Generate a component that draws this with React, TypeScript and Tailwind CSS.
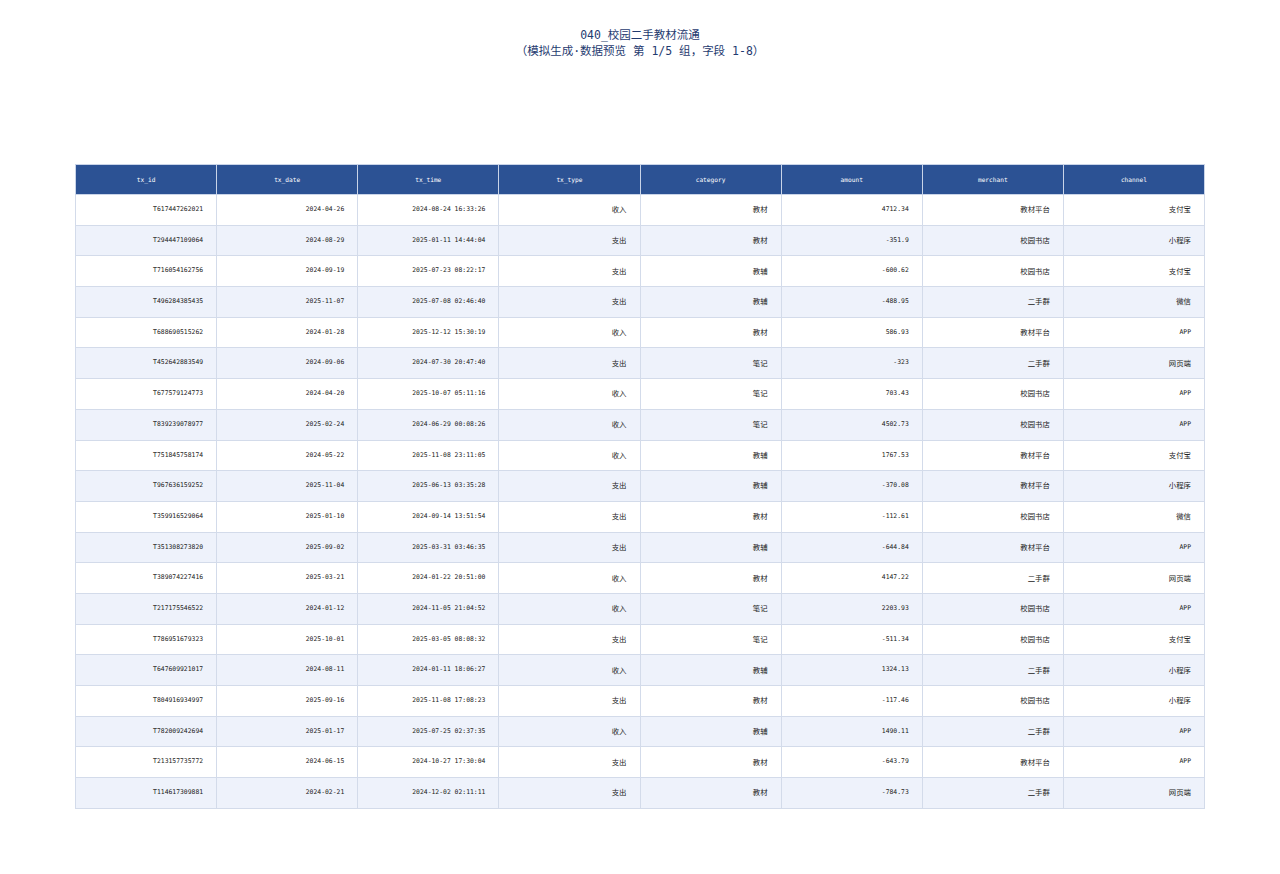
const columns = ["tx_id", "tx_date", "tx_time", "tx_type", "category", "amount", "merchant", "channel"];

const rows: string[][] = [
  ["T617447262021", "2024-04-26", "2024-08-24 16:33:26", "收入", "教材", "4712.34", "教材平台", "支付宝"],
  ["T294447109064", "2024-08-29", "2025-01-11 14:44:04", "支出", "教材", "-351.9", "校园书店", "小程序"],
  ["T716054162756", "2024-09-19", "2025-07-23 08:22:17", "支出", "教辅", "-600.62", "校园书店", "支付宝"],
  ["T496284385435", "2025-11-07", "2025-07-08 02:46:40", "支出", "教辅", "-488.95", "二手群", "微信"],
  ["T688690515262", "2024-01-28", "2025-12-12 15:30:19", "收入", "教材", "586.93", "教材平台", "APP"],
  ["T452642883549", "2024-09-06", "2024-07-30 20:47:40", "支出", "笔记", "-323", "二手群", "网页端"],
  ["T677579124773", "2024-04-20", "2025-10-07 05:11:16", "收入", "笔记", "703.43", "校园书店", "APP"],
  ["T839239078977", "2025-02-24", "2024-06-29 00:08:26", "收入", "笔记", "4502.73", "校园书店", "APP"],
  ["T751845758174", "2024-05-22", "2025-11-08 23:11:05", "收入", "教辅", "1767.53", "教材平台", "支付宝"],
  ["T967636159252", "2025-11-04", "2025-06-13 03:35:28", "支出", "教辅", "-370.08", "教材平台", "小程序"],
  ["T359916529064", "2025-01-10", "2024-09-14 13:51:54", "支出", "教材", "-112.61", "校园书店", "微信"],
  ["T351308273820", "2025-09-02", "2025-03-31 03:46:35", "支出", "教辅", "-644.84", "教材平台", "APP"],
  ["T389074227416", "2025-03-21", "2024-01-22 20:51:00", "收入", "教材", "4147.22", "二手群", "网页端"],
  ["T217175546522", "2024-01-12", "2024-11-05 21:04:52", "收入", "笔记", "2203.93", "校园书店", "APP"],
  ["T786951679323", "2025-10-01", "2025-03-05 08:08:32", "支出", "笔记", "-511.34", "校园书店", "支付宝"],
  ["T647609921017", "2024-08-11", "2024-01-11 18:06:27", "收入", "教辅", "1324.13", "二手群", "小程序"],
  ["T804916934997", "2025-09-16", "2025-11-08 17:08:23", "支出", "教材", "-117.46", "校园书店", "小程序"],
  ["T782009242694", "2025-01-17", "2025-07-25 02:37:35", "收入", "教辅", "1490.11", "二手群", "APP"],
  ["T213157735772", "2024-06-15", "2024-10-27 17:30:04", "支出", "教材", "-643.79", "教材平台", "APP"],
  ["T114617309881", "2024-02-21", "2024-12-02 02:11:11", "支出", "教材", "-784.73", "二手群", "网页端"],
];

// CJK values render a bit larger than the ascii ones in the reference
const isCjk = (v: string) => /[^\x00-\x7f]/.test(v);

export default function App() {
  return (
    <div className="min-h-[874px] w-[1280px] bg-white pt-[28px] font-['DejaVu_Sans_Mono','Noto_Sans_CJK_SC',monospace]">
      <div className="text-center text-[11.5px] leading-[15px] text-[#1f3b70]">
        <div>040_校园二手教材流通</div>
        <div>
          <span className="font-['Noto_Sans_CJK_SC',sans-serif]">（</span>模拟生成·数据预览 第 1/5 组
          <span className="font-['Noto_Sans_CJK_SC',sans-serif]">，</span>字段 1-8
          <span className="font-['Noto_Sans_CJK_SC',sans-serif]">）</span>
        </div>
      </div>

      <div className="mt-[105px] px-[75px]">
        <table className="w-[1130px] table-fixed border-collapse">
          <thead>
            <tr className="h-[30px] bg-[#2c5294]">
              {columns.map((c) => (
                <th
                  key={c}
                  className="border border-[#c9d4e8] text-center text-[6.2px] font-normal text-white"
                >
                  {c}
                </th>
              ))}
            </tr>
          </thead>
          <tbody>
            {rows.map((r, i) => (
              <tr key={r[0]} className={`h-[30.7px] ${i % 2 === 1 ? "bg-[#eef2fb]" : "bg-white"}`}>
                {r.map((v, j) => (
                  <td
                    key={j}
                    className={`border border-[#d3dbea] pr-[13px] text-right text-[#222] ${
                      isCjk(v) ? "text-[7.4px]" : "text-[6.4px]"
                    }`}
                  >
                    {v}
                  </td>
                ))}
              </tr>
            ))}
          </tbody>
        </table>
      </div>
    </div>
  );
}
